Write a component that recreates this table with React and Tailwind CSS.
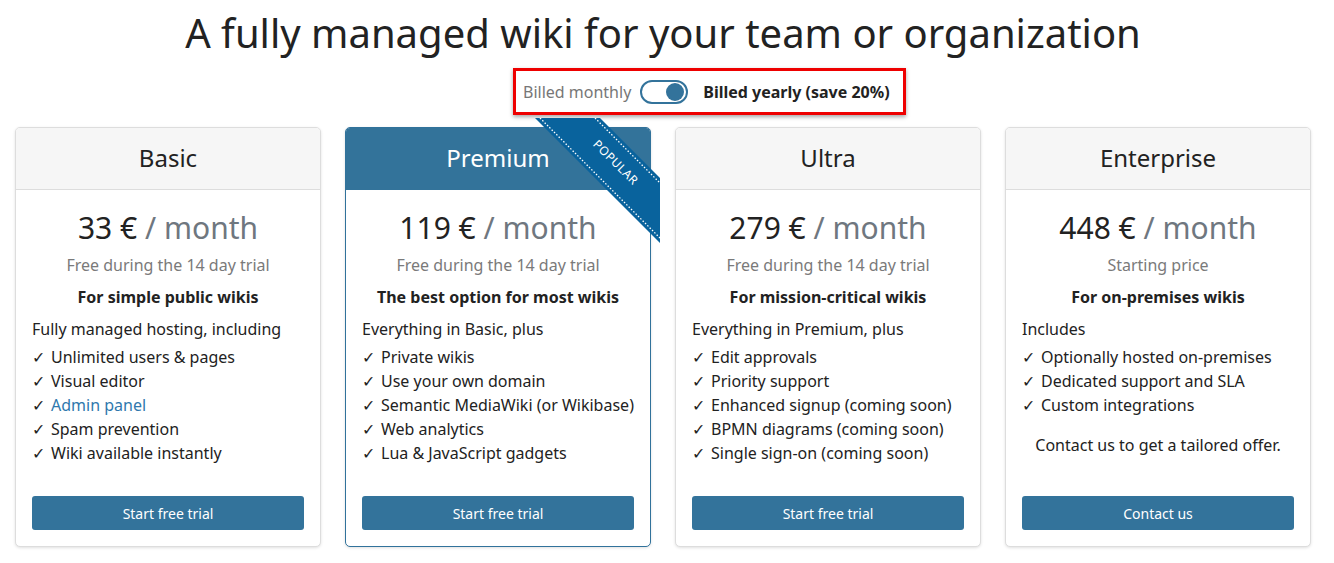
import React from "react";

const plans = [
	{
		name: "Basic",
		price: "33 €",
		note: "Free during the 14 day trial",
		tagline: "For simple public wikis",
		intro: "Fully managed hosting, including",
		features: [
			{ text: "Unlimited users & pages" },
			{ text: "Visual editor" },
			{ text: "Admin panel", link: true },
			{ text: "Spam prevention" },
			{ text: "Wiki available instantly" },
		],
		cta: "Start free trial",
	},
	{
		name: "Premium",
		price: "119 €",
		note: "Free during the 14 day trial",
		tagline: "The best option for most wikis",
		intro: "Everything in Basic, plus",
		features: [
			{ text: "Private wikis" },
			{ text: "Use your own domain" },
			{ text: "Semantic MediaWiki (or Wikibase)" },
			{ text: "Web analytics" },
			{ text: "Lua & JavaScript gadgets" },
		],
		cta: "Start free trial",
		popular: true,
	},
	{
		name: "Ultra",
		price: "279 €",
		note: "Free during the 14 day trial",
		tagline: "For mission-critical wikis",
		intro: "Everything in Premium, plus",
		features: [
			{ text: "Edit approvals" },
			{ text: "Priority support" },
			{ text: "Enhanced signup (coming soon)" },
			{ text: "BPMN diagrams (coming soon)" },
			{ text: "Single sign-on (coming soon)" },
		],
		cta: "Start free trial",
	},
	{
		name: "Enterprise",
		price: "448 €",
		note: "Starting price",
		tagline: "For on-premises wikis",
		intro: "Includes",
		features: [
			{ text: "Optionally hosted on-premises" },
			{ text: "Dedicated support and SLA" },
			{ text: "Custom integrations" },
		],
		extra: "Contact us to get a tailored offer.",
		cta: "Contact us",
	},
];

const Ribbon = () => (
	<div className="absolute -top-[10px] -right-[10px] w-[125px] h-[125px] pointer-events-none">
		<svg width="125" height="125" viewBox="0 0 125 125">
			<polygon points="0,0 65,0 125,60 125,125" fill="#09639d" />
			<line x1="5" y1="0" x2="125" y2="120" stroke="#fff" strokeWidth="1.3" strokeDasharray="1.5 1.8" />
			<line x1="60" y1="0" x2="125" y2="65" stroke="#fff" strokeWidth="1.3" strokeDasharray="1.5 1.8" />
			<text
				x="80"
				y="45"
				transform="rotate(45 80 45)"
				textAnchor="middle"
				dominantBaseline="middle"
				fill="#fff"
				fontSize="12"
				fontFamily="'Noto Sans', sans-serif"
				letterSpacing="0.5"
			>
				POPULAR
			</text>
		</svg>
	</div>
);

const PlanCard = ({ plan }) => {
	const hot = plan.popular;
	return (
		<div
			className={`relative flex flex-col w-[306px] bg-white rounded-[5px] border shadow-[0_1px_3px_rgba(0,0,0,0.12)] ${
				hot ? "border-[#31729b]" : "border-[#dddddd]"
			}`}
		>
			{/* Header */}
			<div
				className={`h-[62px] flex items-center justify-center rounded-t-[4px] border-b text-[24px] ${
					hot ? "bg-[#33739a] text-white border-[#33739a]" : "bg-[#f6f6f6] text-[#222] border-[#dddddd]"
				}`}
			>
				<span className="-mt-[2px]">{plan.name}</span>
			</div>

			{/* Body */}
			<div className="flex flex-col flex-1 px-4 pt-4 pb-4">
				<div className="text-center text-[30px] leading-[44px] text-[#222]">
					{plan.price} <span className="text-[#6f777f]">/ month</span>
				</div>
				<div className="text-center text-[16px] leading-6 mt-[3px] text-[#7a7a7a]">{plan.note}</div>
				<div className="text-center text-[16px] leading-6 mt-2 font-bold text-[#222]">{plan.tagline}</div>
				<div className="text-[16px] leading-6 mt-2 text-[#222]">{plan.intro}</div>
				<ul className="mt-1">
					{plan.features.map((f) => (
						<li key={f.text} className="text-[16px] leading-6 text-[#222] whitespace-nowrap">
							<span className="inline-block w-[19px]">✓</span>
							<span className={f.link ? "text-[#2f78ad]" : ""}>{f.text}</span>
						</li>
					))}
				</ul>
				{plan.extra && (
					<div className="text-center text-[16px] leading-6 mt-4 text-[#222]">{plan.extra}</div>
				)}
				<button className="mt-auto h-[34px] w-full rounded-[3px] bg-[#33739b] text-white text-[14px]">
					{plan.cta}
				</button>
			</div>

			{hot && <Ribbon />}
		</div>
	);
};

const App = () => {
	return (
		<div className="w-[1334px] h-[563px] bg-white font-['Noto_Sans',sans-serif] text-[#222] overflow-hidden">
			<div className="w-[1296px] ml-[15px]">
				<h1 className="pt-[9px] text-center text-[40px] leading-[48px] text-[#222]">
					A fully managed wiki for your team or organization
				</h1>

				{/* Billing toggle */}
				<div className="flex pl-[498px] mt-[11px]">
					<div className="flex items-center h-[47px] w-[393px] border-[3px] border-[#ee0000] shadow-[0_2px_4px_rgba(0,0,0,0.35)] pl-[7px]">
						<span className="text-[16px] text-[#777]">Billed monthly</span>
						<div className="ml-[9px] w-[48px] h-[24px] rounded-full border-2 border-[#33739b] flex items-center justify-end pr-[2px]">
							<div className="w-[18px] h-[18px] rounded-full bg-[#33739b]" />
						</div>
						<span className="ml-[15px] text-[16px] font-bold text-[#222]">Billed yearly (save 20%)</span>
					</div>
				</div>

				{/* Plans */}
				<div className="flex gap-[24px] mt-[12px] h-[420px]">
					{plans.map((p) => (
						<PlanCard key={p.name} plan={p} />
					))}
				</div>
			</div>
		</div>
	);
};

export default App;
